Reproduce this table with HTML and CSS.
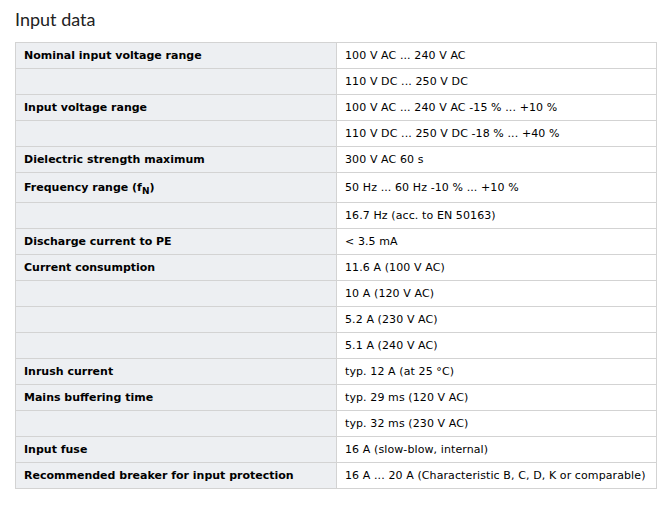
FILE: index.html
```html
<!DOCTYPE html>
<html>
<head>
<meta charset="utf-8">
<link rel="stylesheet" href="styles.css">
</head>
<body>
<h2 class="title">Input data</h2>
<table class="spec">
<tr><th>Nominal input voltage range</th><td>100 V AC ... 240 V AC</td></tr>
<tr><th></th><td>110 V DC ... 250 V DC</td></tr>
<tr><th>Input voltage range</th><td>100 V AC ... 240 V AC -15 % ... +10 %</td></tr>
<tr><th></th><td>110 V DC ... 250 V DC -18 % ... +40 %</td></tr>
<tr><th>Dielectric strength maximum</th><td>300 V AC 60 s</td></tr>
<tr class="tall"><th>Frequency range (f<sub>N</sub>)</th><td>50 Hz ... 60 Hz -10 % ... +10 %</td></tr>
<tr><th></th><td>16.7 Hz (acc. to EN 50163)</td></tr>
<tr><th>Discharge current to PE</th><td>&lt; 3.5 mA</td></tr>
<tr><th>Current consumption</th><td>11.6 A (100 V AC)</td></tr>
<tr><th></th><td>10 A (120 V AC)</td></tr>
<tr><th></th><td>5.2 A (230 V AC)</td></tr>
<tr><th></th><td>5.1 A (240 V AC)</td></tr>
<tr><th>Inrush current</th><td>typ. 12 A (at 25 °C)</td></tr>
<tr><th>Mains buffering time</th><td>typ. 29 ms (120 V AC)</td></tr>
<tr><th></th><td>typ. 32 ms (230 V AC)</td></tr>
<tr><th>Input fuse</th><td>16 A (slow-blow, internal)</td></tr>
<tr><th>Recommended breaker for input protection</th><td>16 A ... 20 A (Characteristic B, C, D, K or comparable)</td></tr>
</table>
</body>
</html>
```
FILE: styles.css
```css
body {
  margin: 0;
  padding: 0 15px;
  background: #fff;
  font-family: "DejaVu Sans", Verdana, sans-serif;
  color: #000;
}
.title {
  margin: 0;
  padding-top: 8px;
  height: 34px;
  box-sizing: border-box;
  font-family: Lato, "Open Sans", sans-serif;
  font-weight: 400;
  font-size: 18px;
  line-height: 22px;
  color: #222;
}
.spec {
  width: 642px;
  border-collapse: collapse;
  font-size: 11px;
  margin-top: 8px;
}
.spec th, .spec td {
  border: 1px solid #d3d3d3;
  height: 26px;
  padding: 0 8px;
  box-sizing: border-box;
  vertical-align: middle;
  text-align: left;
  line-height: 14px;
}
.spec th {
  width: 321px;
  background: #edeff2;
  font-weight: bold;
}
.spec td {
  background: #fff;
  font-weight: normal;
  letter-spacing: 0.1px;
}
.spec tr.tall th, .spec tr.tall td {
  height: 30px;
}
.spec sub {
  font-size: 9px;
  line-height: 0;
}
```
